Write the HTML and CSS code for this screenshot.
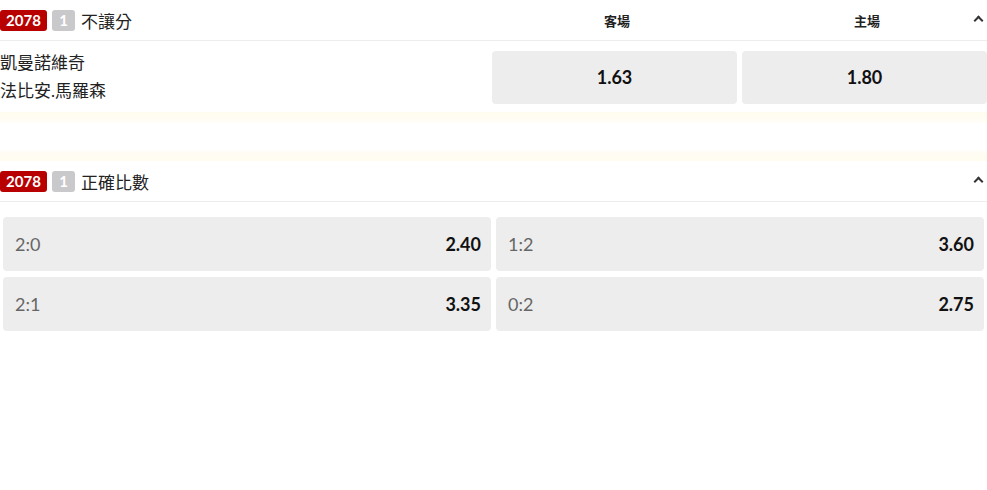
FILE: index.html
```html
<!DOCTYPE html>
<html>
<head>
  <meta charset="UTF-8">
  <title>不讓分 / 正確比數</title>
  <link rel="stylesheet" href="styles.css">
</head>
<body>
  <!-- 不讓分 -->
  <div class="market">
    <div class="market-head">
      <div class="title">
        <span class="badge-no">2078</span>
        <span class="badge-leg">1</span>
        <span class="name">不讓分</span>
      </div>
      <div class="col-label">客場</div>
      <div class="col-label">主場</div>
      <span class="chev"></span>
    </div>
    <div class="match-row">
      <div class="teams">
        <div>凱曼諾維奇</div>
        <div>法比安.馬羅森</div>
      </div>
      <div class="odd-btn">1.63</div>
      <div class="odd-btn">1.80</div>
    </div>
  </div>

  <div class="spacer"></div>

  <!-- 正確比數 -->
  <div class="market">
    <div class="market-head">
      <div class="title">
        <span class="badge-no">2078</span>
        <span class="badge-leg">1</span>
        <span class="name">正確比數</span>
      </div>
      <span class="chev"></span>
    </div>
    <div class="score-grid">
      <div class="score-btn"><span class="score">2:0</span><span class="price">2.40</span></div>
      <div class="score-btn"><span class="score">1:2</span><span class="price">3.60</span></div>
      <div class="score-btn"><span class="score">2:1</span><span class="price">3.35</span></div>
      <div class="score-btn"><span class="score">0:2</span><span class="price">2.75</span></div>
    </div>
  </div>
</body>
</html>
```

FILE: styles.css
```css
body {
  margin: 0;
  font-family: Lato, "Noto Sans CJK TC", sans-serif;
  background: #fff;
  color: #222;
}

.market-head {
  display: flex;
  align-items: center;
  height: 40px;
  border-bottom: 1px solid #ececec;
  position: relative;
}

.title {
  display: flex;
  align-items: center;
  flex: 0 0 492px;
}

.badge-no {
  background: #b80000;
  color: #fff;
  font-weight: bold;
  font-size: 15px;
  height: 21px;
  line-height: 21px;
  width: 47px;
  text-align: center;
  border-radius: 3px;
}

.badge-leg {
  background: #c9c9cc;
  color: #fff;
  font-weight: bold;
  font-size: 15px;
  height: 21px;
  line-height: 21px;
  width: 23px;
  text-align: center;
  border-radius: 3px;
  margin-left: 5px;
}

.name {
  font-size: 17px;
  margin-left: 6px;
  color: #222;
}

.col-label {
  flex: 0 0 250px;
  text-align: center;
  font-size: 13px;
  font-weight: bold;
  color: #222;
}

.chev {
  position: absolute;
  right: 5px;
  top: 17px;
  width: 5px;
  height: 5px;
  border-left: 2px solid #333;
  border-top: 2px solid #333;
  transform: rotate(45deg);
}

.match-row {
  display: flex;
  align-items: center;
  padding: 8px 0 7px;
}

.teams {
  flex: 0 0 492px;
  font-size: 17px;
  line-height: 28px;
  color: #222;
}

.odd-btn {
  flex: 0 0 245px;
  height: 53px;
  margin-right: 5px;
  background: #ededed;
  border-radius: 4px;
  display: flex;
  align-items: center;
  justify-content: center;
  font-size: 18px;
  font-weight: bold;
  color: #111;
}

.odd-btn:last-child {
  margin-right: 0;
}

.spacer {
  height: 49px;
  background: linear-gradient(to bottom, #fffcef 0, #fffdf5 9px, #fff 12px, #fff 37px, #fffdf5 40px, #fffcef 49px);
}

.score-grid {
  display: grid;
  grid-template-columns: 488px 488px;
  gap: 6px 5px;
  padding: 15px 3px;
}

.score-btn {
  height: 54px;
  background: #ededed;
  border-radius: 4px;
  display: flex;
  align-items: center;
  justify-content: space-between;
  padding: 0 10px 0 12px;
}

.score {
  font-size: 18px;
  color: #666;
}

.price {
  font-size: 18px;
  font-weight: bold;
  color: #111;
}
```
